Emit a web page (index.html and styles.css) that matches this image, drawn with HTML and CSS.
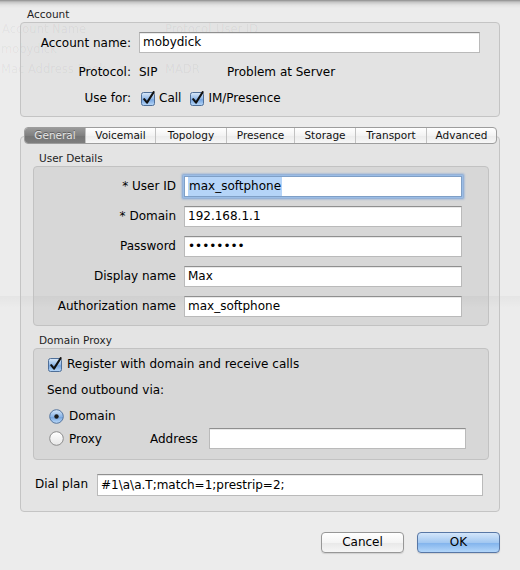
FILE: index.html
```html
<!DOCTYPE html>
<html>
<head>
<meta charset="utf-8">
<title>Account</title>
<link rel="stylesheet" href="styles.css">
</head>
<body>
<div class="ghost">
  <div class="band"></div>
  <span class="g g-h1">Account Name</span>
  <span class="g g-h2">Protocol</span>
  <span class="g g-h3">User ID</span>
  <span class="g g-r1">mobydick</span>
  <span class="g g-r2a">Mac Address Book</span>
  <span class="g g-r2b">MADR</span>
</div>

<div class="sheet">
  <div class="legend legend-top">Account</div>
  <div class="group account">
    <div class="arow arow-name">
      <div class="lbl"><span>Account name:</span></div>
      <div class="field field-account">mobydick</div>
    </div>
    <div class="arow arow-proto">
      <div class="lbl"><span>Protocol:</span></div>
      <span class="val-sip">SIP</span>
      <span>Problem at Server</span>
    </div>
    <div class="arow arow-use">
      <div class="lbl"><span>Use for:</span></div>
      <span class="check check-call">
        <svg class="cb" width="16" height="15" viewBox="0 0 16 15"><defs><linearGradient id="cbg" x1="0" y1="0" x2="0" y2="1"><stop offset="0" stop-color="#dbe9f8"/><stop offset="0.5" stop-color="#8fb8e8"/><stop offset="0.55" stop-color="#76a5e0"/><stop offset="1" stop-color="#b9d8f8"/></linearGradient></defs><rect x="0.5" y="1.5" width="13" height="13" rx="2" fill="url(#cbg)" stroke="#4f6f98"/><path d="M3.2 8.2 L6 11.6 L12.6 1.2" fill="none" stroke="#111" stroke-width="2.1" stroke-linecap="round" stroke-linejoin="round"/></svg>
        <span>Call</span>
      </span>
      <span class="check check-im">
        <svg class="cb" width="16" height="15" viewBox="0 0 16 15"><rect x="0.5" y="1.5" width="13" height="13" rx="2" fill="url(#cbg)" stroke="#4f6f98"/><path d="M3.2 8.2 L6 11.6 L12.6 1.2" fill="none" stroke="#111" stroke-width="2.1" stroke-linecap="round" stroke-linejoin="round"/></svg>
        <span>IM/Presence</span>
      </span>
    </div>
  </div>

  <div class="tabs">
    <div class="tab tab-sel tw-general">General</div>
    <div class="tab tw-voicemail">Voicemail</div>
    <div class="tab tw-topology">Topology</div>
    <div class="tab tw-presence">Presence</div>
    <div class="tab tw-storage">Storage</div>
    <div class="tab tw-transport">Transport</div>
    <div class="tab tw-advanced">Advanced</div>
  </div>

  <div class="tabbox">
    <div class="legend legend-in">User Details</div>
    <div class="inner details">
      <span class="dlbl">* User ID</span>
      <div class="field focus"><span class="sel">max_softphone</span></div>
      <span class="dlbl">* Domain</span>
      <div class="field">192.168.1.1</div>
      <span class="dlbl">Password</span>
      <div class="field pw">••••••••</div>
      <span class="dlbl">Display name</span>
      <div class="field">Max</div>
      <span class="dlbl">Authorization name</span>
      <div class="field">max_softphone</div>
    </div>

    <div class="legend legend-in legend-proxy">Domain Proxy</div>
    <div class="inner proxy">
      <div class="prow prow-reg">
        <svg class="cb" width="16" height="15" viewBox="0 0 16 15"><rect x="0.5" y="1.5" width="13" height="13" rx="2" fill="url(#cbg)" stroke="#4f6f98"/><path d="M3.2 8.2 L6 11.6 L12.6 1.2" fill="none" stroke="#111" stroke-width="2.1" stroke-linecap="round" stroke-linejoin="round"/></svg>
        <span>Register with domain and receive calls</span>
      </div>
      <div class="prow prow-send">Send outbound via:</div>
      <div class="prow prow-radio">
        <svg class="rb" width="15" height="15" viewBox="0 0 15 15"><defs><linearGradient id="rbg" x1="0" y1="0" x2="0" y2="1"><stop offset="0" stop-color="#d6e7f9"/><stop offset="0.5" stop-color="#8cb6e8"/><stop offset="0.55" stop-color="#74a4df"/><stop offset="1" stop-color="#bfdcf9"/></linearGradient><linearGradient id="rbw" x1="0" y1="0" x2="0" y2="1"><stop offset="0" stop-color="#ffffff"/><stop offset="1" stop-color="#e6e6e6"/></linearGradient></defs><circle cx="7.5" cy="7.5" r="6.8" fill="url(#rbg)" stroke="#55759e"/><circle cx="7.5" cy="7.5" r="2.2" fill="#1c1c1c"/></svg>
        <span>Domain</span>
      </div>
      <div class="prow prow-proxy">
        <span class="radio-proxy">
          <svg class="rb" width="15" height="15" viewBox="0 0 15 15"><circle cx="7.5" cy="7.5" r="6.8" fill="url(#rbw)" stroke="#8c8c8c"/></svg>
          <span>Proxy</span>
        </span>
        <span class="addr-lbl">Address</span>
        <div class="field field-addr"></div>
      </div>
    </div>

    <div class="dial">
      <span class="dial-lbl">Dial plan</span>
      <div class="field field-dial">#1\a\a.T;match=1;prestrip=2;</div>
    </div>
  </div>

  <div class="buttons">
    <div class="btn">Cancel</div>
    <div class="btn btn-ok">OK</div>
  </div>
</div>
</body>
</html>
```
FILE: styles.css
```css
* { box-sizing: border-box; }

html, body { margin: 0; padding: 0; }

body {
  width: 520px;
  height: 570px;
  overflow: hidden;
  position: relative;
  font-family: "DejaVu Sans", "Noto Sans", sans-serif;
  font-size: 12px;
  color: #000;
  background: linear-gradient(#8c8c8c 0px, #c4c4c4 2px, #e2e2e2 5px, #ececec 8px, #ececec 100%);
}

/* faint window showing through behind the sheet */
.ghost {
  position: absolute;
  left: 0; top: 0; right: 0; bottom: 0;
  z-index: 0;
  color: rgba(0, 0, 0, 0.05);
  font-size: 11.5px;
}
.ghost .band {
  position: absolute;
  left: 0; right: 0;
  top: 296px;
  height: 12px;
  background: linear-gradient(rgba(0,0,0,0.03), rgba(0,0,0,0));
}
.g {
  position: absolute;
  white-space: nowrap;
  line-height: 14px;
}
.g-h1 { left: 2px; top: 22px; }
.g-h2 { left: 165px; top: 22px; }
.g-h3 { left: 216px; top: 22px; }
.g-r1 { left: 1px; top: 42px; }
.g-r2a { left: 1px; top: 62px; }
.g-r2b { left: 165px; top: 62px; }

.sheet {
  position: relative;
  z-index: 1;
  padding: 7px 20px 0 20px;
}

.legend {
  font-size: 10.5px;
  line-height: 15px;
  height: 15px;
  color: #1e1e1e;
}
.legend-top { padding-left: 7px; }
.legend-in { padding-left: 6px; }
.legend-proxy { margin-top: 7px; }

.group {
  border: 1px solid #c4c4c4;
  border-radius: 4px;
  background: rgba(0, 0, 0, 0.035);
}

.account {
  height: 95px;
  padding: 9px 0 8px 0;
}

.arow {
  display: flex;
  align-items: center;
  height: 20px;
  white-space: nowrap;
}
.arow-name { height: 21px; }
.arow-proto { margin-top: 9px; }
.arow-use { margin-top: 6px; }

.lbl {
  width: 110px;
  flex: none;
  display: flex;
  justify-content: flex-end;
  margin-right: 8px;
}

.field {
  height: 21px;
  background: #fff;
  border: 1px solid #bababa;
  border-top-color: #8f8f8f;
  box-shadow: inset 0 1px 0 #e9e9e9;
  padding: 0 3px;
  line-height: 19px;
  white-space: nowrap;
  overflow: hidden;
  flex: none;
}
.field-account { width: 341px; }

.val-sip { width: 88px; flex: none; }

.check {
  display: inline-flex;
  align-items: center;
}
.check .cb { margin-right: 2px; }
.check-call { margin-left: 2px; }
.check-im { margin-left: 9px; }
.cb { flex: none; display: block; }
.rb { flex: none; display: block; }

/* tabs */
.tabs {
  position: relative;
  z-index: 2;
  display: flex;
  margin-top: 10px;
  margin-left: 4px;
  width: 473px;
  height: 17px;
  border: 1px solid #9d9d9d;
  border-radius: 4px;
  overflow: hidden;
  background: linear-gradient(#ffffff, #f3f3f3 50%, #ebebeb 51%, #f7f7f7);
}
.tab {
  height: 15px;
  line-height: 15px;
  font-size: 10.5px;
  text-align: center;
  border-left: 1px solid #c2c2c2;
  color: #111;
  flex: none;
}
.tab-sel {
  border-left: none;
  color: #e6e6e6;
  background: linear-gradient(#9a9a9a, #808080 50%, #747474 51%, #7e7e7e);
  text-shadow: 0 -1px 0 rgba(0,0,0,0.35);
}
.tw-general { width: 60px; }
.tw-voicemail { width: 70px; }
.tw-topology { width: 71px; }
.tw-presence { width: 68px; }
.tw-storage { width: 61px; }
.tw-transport { width: 71px; }
.tw-advanced { width: 70px; }

.tabbox {
  margin-top: -8px;
  height: 376px;
  border: 1px solid #c4c4c4;
  border-radius: 4px;
  background: rgba(0, 0, 0, 0.03);
  padding: 14px 10px 0 12px;
}

.inner {
  border: 1px solid #c2c2c2;
  border-radius: 4px;
  background: rgba(0, 0, 0, 0.055);
}

.details {
  height: 160px;
  display: grid;
  grid-template-columns: 142px 278px;
  grid-auto-rows: 21px;
  column-gap: 8px;
  row-gap: 9px;
  padding: 9px 0 8px 0;
}
.dlbl {
  justify-self: end;
  line-height: 21px;
  white-space: nowrap;
}
.field.focus {
  border-color: #7f9fc6;
  box-shadow: 0 0 0 1px #9bbde6, 0 0 2px 2px rgba(104, 152, 215, 0.85);
}
.sel {
  display: inline-block;
  background: #b5d4f8;
  line-height: 19px;
  padding: 0 1px;
}

.proxy {
  height: 112px;
  padding: 5px 0 10px 13px;
}
.prow {
  display: flex;
  align-items: center;
  height: 20px;
  white-space: nowrap;
}
.prow-reg .cb { margin-left: 1px; margin-right: 3px; }
.prow-send { margin-top: 6px; }
.prow-radio { margin-top: 6px; }
.prow-radio .rb { margin-left: 2px; margin-right: 5px; }
.prow-proxy { margin-top: 2px; height: 21px; }
.radio-proxy {
  display: flex;
  align-items: center;
  width: 103px;
  flex: none;
}
.radio-proxy .rb { margin-left: 2px; margin-right: 5px; }
.addr-lbl { width: 59px; flex: none; }
.field-addr { width: 257px; }

.dial {
  display: flex;
  align-items: center;
  margin-top: 14px;
  height: 22px;
  white-space: nowrap;
}
.dial-lbl {
  width: 64px;
  flex: none;
  padding-left: 2px;
  margin-top: -3px;
}
.field-dial { width: 386px; height: 22px; line-height: 20px; }

.buttons {
  display: flex;
  justify-content: flex-end;
  gap: 13px;
  margin-top: 20px;
}
.btn {
  width: 83px;
  height: 21px;
  line-height: 19px;
  text-align: center;
  border: 1px solid #979797;
  border-radius: 4px;
  background: linear-gradient(#ffffff, #f4f4f4 50%, #e8e8e8 51%, #f6f6f6);
  box-shadow: 0 1px 1px rgba(0,0,0,0.12);
}
.btn-ok {
  border-color: #5877a5;
  background: linear-gradient(#d4e6fa, #a3c8f1 50%, #80b2ec 51%, #b3d6fa);
}
```
